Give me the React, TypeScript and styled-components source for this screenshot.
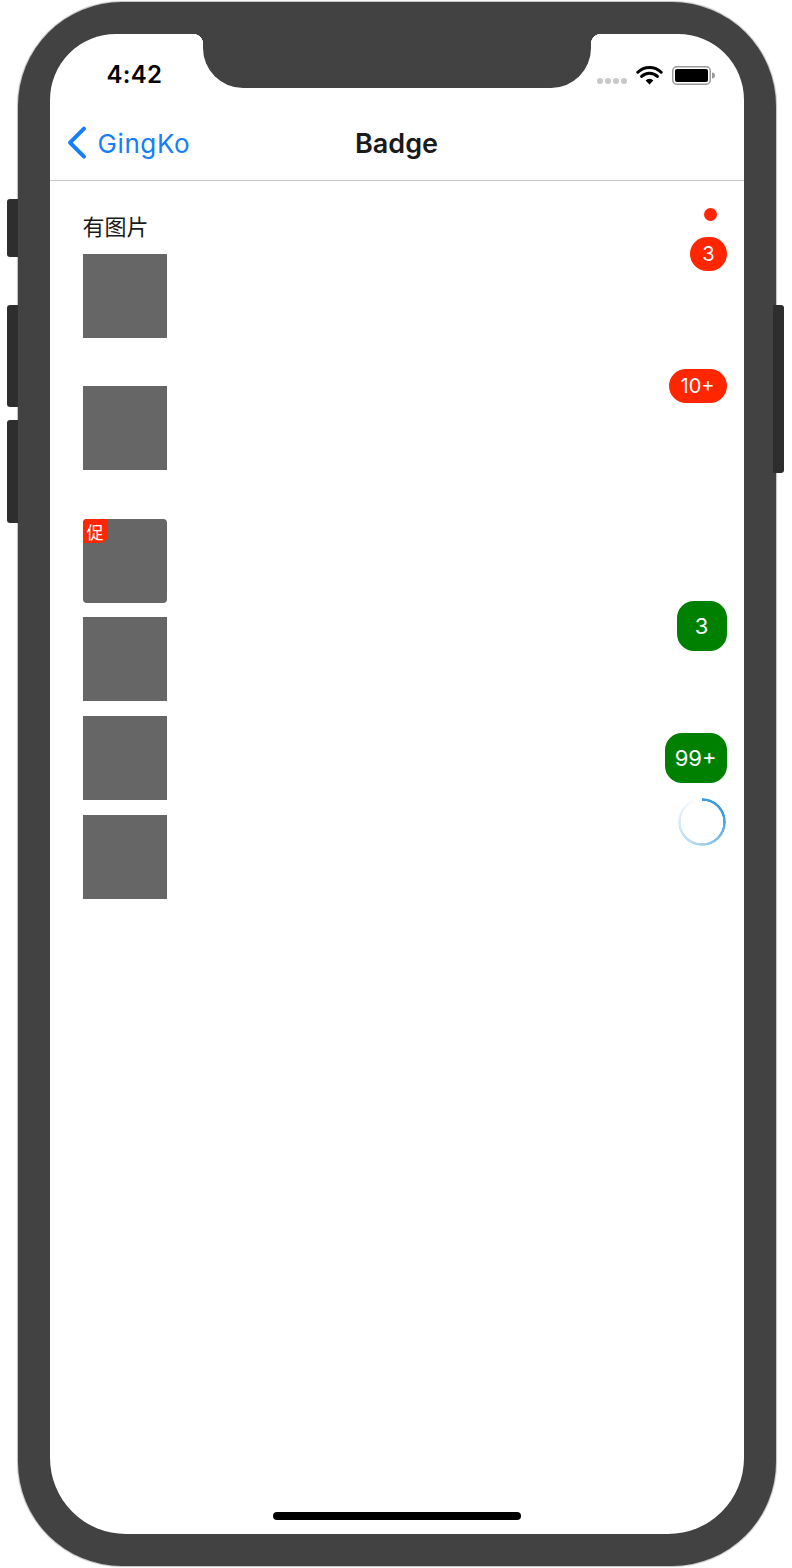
import React from "react";
import styled, { createGlobalStyle, css } from "styled-components";

const GlobalStyle = createGlobalStyle`
  html, body {
    margin: 0;
    padding: 0;
    background: #ffffff;
  }
  body {
    font-family: Inter, "Noto Sans", "Noto Sans CJK SC", sans-serif;
  }
  * {
    box-sizing: border-box;
  }
`;

const RED = "#ff2600";
const GREEN = "#008000";
const BEZEL = "#424242";

type Badge = { label?: string; kind: "dot" | "red" | "green"; top: number };

const badges: Badge[] = [
  { kind: "dot", top: 27 },
  { kind: "red", label: "3", top: 16 },
  { kind: "red", label: "10+", top: 98 },
  { kind: "green", label: "3", top: 198 },
  { kind: "green", label: "99+", top: 82 },
];

const thumbs = [
  { top: 15 },
  { top: 48 },
  { top: 49, tag: "促" },
  { top: 14 },
  { top: 15 },
  { top: 15 },
];

const WifiIcon = () => (
  <svg width="27" height="20" viewBox="0 0 27 20">
    <path
      d="M13.5 19.5 L9.6 15.4 A5.6 5.6 0 0 1 17.4 15.4 Z"
      fill="#000"
    />
    <path
      d="M5.6 11.4 A11.2 11.2 0 0 1 21.4 11.4"
      stroke="#000"
      strokeWidth="3"
      fill="none"
      strokeLinecap="round"
    />
    <path
      d="M1.8 7.2 A16.6 16.6 0 0 1 25.2 7.2"
      stroke="#000"
      strokeWidth="3"
      fill="none"
      strokeLinecap="round"
    />
  </svg>
);

const BatteryIcon = () => (
  <svg width="43" height="19" viewBox="0 0 43 19">
    <rect x="0.75" y="0.75" width="37.5" height="17.5" rx="4" fill="none" stroke="#9a9a9a" strokeWidth="1.5" />
    <rect x="3" y="3" width="33" height="13" rx="2" fill="#000" />
    <path d="M40 6.5 a2.5 2.5 0 0 1 0 6 Z" fill="#9a9a9a" />
  </svg>
);

const BackChevron = () => (
  <svg width="22" height="34" viewBox="0 0 22 34">
    <path
      d="M18 3 L4 17 L18 31"
      stroke="#147efb"
      strokeWidth="4"
      fill="none"
      strokeLinecap="round"
      strokeLinejoin="round"
    />
  </svg>
);

export default function App() {
  return (
    <>
      <GlobalStyle />
      <Page>
        <Phone>
          <SideButton $side="left" $top={197} $height={58} />
          <SideButton $side="left" $top={303} $height={102} />
          <SideButton $side="left" $top={418} $height={103} />
          <SideButton $side="right" $top={303} $height={168} />
          <Screen>
            <Notch />
            <StatusBar>
              <Time>4:42</Time>
              <StatusIcons>
                <Signal>
                  <SignalDot />
                  <SignalDot />
                  <SignalDot />
                  <SignalDot />
                </Signal>
                <WifiIcon />
                <BatteryIcon />
              </StatusIcons>
            </StatusBar>
            <NavBar>
              <BackButton>
                <BackChevron />
                <BackLabel>GingKo</BackLabel>
              </BackButton>
              <NavTitle>Badge</NavTitle>
            </NavBar>
            <Content>
              <LeftColumn>
                <Caption>有图片</Caption>
                {thumbs.map((t, i) => (
                  <Thumb key={i} $mt={t.top} $rounded={!!t.tag}>
                    {t.tag && <Tag>{t.tag}</Tag>}
                  </Thumb>
                ))}
              </LeftColumn>
              <RightColumn>
                {badges.map((b, i) =>
                  b.kind === "dot" ? (
                    <Dot key={i} $mt={b.top} />
                  ) : (
                    <Pill key={i} $mt={b.top} $kind={b.kind}>
                      {b.label}
                    </Pill>
                  )
                )}
                <Spinner />
              </RightColumn>
            </Content>
            <HomeIndicator />
          </Screen>
        </Phone>
      </Page>
    </>
  );
}

const Page = styled.div`
  width: 792px;
  height: 1568px;
  display: flex;
  justify-content: center;
  align-items: center;
  overflow: hidden;
`;

const Phone = styled.div`
  position: relative;
  width: 758px;
  height: 1564px;
  margin-left: 1px;
  padding: 32px;
  background: ${BEZEL};
  border-radius: 104px;
  box-shadow: 0 0 1px 1px rgba(0, 0, 0, 0.25);
  display: flex;
`;

const SideButton = styled.div<{ $side: "left" | "right"; $top: number; $height: number }>`
  position: absolute;
  top: ${(p) => p.$top}px;
  height: ${(p) => p.$height}px;
  width: 11px;
  background: #2e2e2e;
  ${(p) =>
    p.$side === "left"
      ? css`
          left: -11px;
          border-radius: 3px 0 0 3px;
        `
      : css`
          right: -8px;
          border-radius: 0 3px 3px 0;
        `}
`;

const Screen = styled.div`
  position: relative;
  flex: 1;
  background: #ffffff;
  border-radius: 66px 66px 76px 76px;
  overflow: hidden;
  display: flex;
  flex-direction: column;
`;

const Notch = styled.div`
  position: absolute;
  top: 0;
  left: 153px;
  width: 388px;
  height: 54px;
  background: ${BEZEL};
  border-radius: 0 0 40px 40px;

  &::before,
  &::after {
    content: "";
    position: absolute;
    top: 0;
    width: 10px;
    height: 10px;
  }
  &::before {
    left: -10px;
    background: radial-gradient(circle at 0 100%, transparent 10px, ${BEZEL} 10.5px);
  }
  &::after {
    right: -10px;
    background: radial-gradient(circle at 100% 100%, transparent 10px, ${BEZEL} 10.5px);
  }
`;

const StatusBar = styled.div`
  height: 70px;
  flex-shrink: 0;
  display: flex;
  justify-content: space-between;
  align-items: flex-start;
  padding: 28px 29px 0 57px;
`;

const Time = styled.div`
  font-size: 24px;
  font-weight: 600;
  line-height: 26px;
  color: #000;
  letter-spacing: 0.3px;
`;

const StatusIcons = styled.div`
  display: flex;
  align-items: center;
  gap: 9px;
  margin-top: 3px;
`;

const Signal = styled.div`
  display: flex;
  gap: 2px;
  margin-top: 12px;
`;

const SignalDot = styled.span`
  width: 6px;
  height: 6px;
  border-radius: 50%;
  background: #c8c8c8;
`;

const NavBar = styled.div`
  position: relative;
  height: 77px;
  flex-shrink: 0;
  display: flex;
  align-items: center;
  justify-content: center;
  padding-top: 3px;
  border-bottom: 1px solid #c8c8cc;
`;

const BackButton = styled.div`
  position: absolute;
  left: 16px;
  top: 50%;
  transform: translateY(-48%);
  display: flex;
  align-items: center;
  gap: 10px;
`;

const BackLabel = styled.span`
  font-size: 26px;
  color: #147efb;
  letter-spacing: 0.6px;
`;

const NavTitle = styled.h1`
  margin: 0;
  font-size: 27px;
  font-weight: 600;
  color: #1a1a1a;
`;

const Content = styled.div`
  flex: 1;
  display: flex;
  justify-content: space-between;
  padding: 0 17px 0 33px;
`;

const LeftColumn = styled.div`
  display: flex;
  flex-direction: column;
  padding-top: 31px;
`;

const Caption = styled.div`
  font-family: "Noto Sans CJK SC", sans-serif;
  font-size: 22px;
  line-height: 27px;
  color: #1a1a1a;
`;

const Thumb = styled.div<{ $mt: number; $rounded: boolean }>`
  position: relative;
  width: 84px;
  height: 84px;
  margin-top: ${(p) => p.$mt}px;
  background: #666666;
  border-radius: ${(p) => (p.$rounded ? "4px" : "0")};
  overflow: hidden;
`;

const Tag = styled.span`
  position: absolute;
  top: 0;
  left: 0;
  width: 25px;
  height: 24px;
  display: flex;
  align-items: center;
  justify-content: center;
  background: ${RED};
  color: #fff;
  font-family: "Noto Sans CJK SC", sans-serif;
  font-size: 17px;
  line-height: 1;
  border-bottom-right-radius: 8px;
`;

const RightColumn = styled.div`
  display: flex;
  flex-direction: column;
  align-items: flex-end;
`;

const Dot = styled.span<{ $mt: number }>`
  width: 13px;
  height: 13px;
  margin-top: ${(p) => p.$mt}px;
  margin-right: 10px;
  border-radius: 50%;
  background: ${RED};
`;

const Pill = styled.span<{ $mt: number; $kind: "red" | "green" }>`
  display: flex;
  align-items: center;
  justify-content: center;
  margin-top: ${(p) => p.$mt}px;
  color: #fff;
  font-family: Inter, "Noto Sans", sans-serif;
  ${(p) =>
    p.$kind === "red"
      ? css`
          min-width: 35px;
          height: 34px;
          padding: 0 12px;
          border-radius: 17px;
          background: ${RED};
          font-size: 20px;
        `
      : css`
          min-width: 50px;
          height: 50px;
          padding: 0 10px;
          border-radius: 17px;
          background: ${GREEN};
          font-size: 22px;
        `}
`;

const Spinner = styled.span`
  width: 48px;
  height: 48px;
  margin-top: 15px;
  margin-right: 1px;
  border-radius: 50%;
  background: conic-gradient(
    from 0deg,
    #3d9be0 0deg,
    #3d9be0 70deg,
    rgba(61, 155, 224, 0.45) 180deg,
    rgba(61, 155, 224, 0.12) 300deg,
    rgba(61, 155, 224, 0) 350deg
  );
  -webkit-mask: radial-gradient(farthest-side, transparent calc(100% - 3px), #000 calc(100% - 2.5px));
  mask: radial-gradient(farthest-side, transparent calc(100% - 3px), #000 calc(100% - 2.5px));
`;

const HomeIndicator = styled.div`
  width: 248px;
  height: 8px;
  margin: 0 auto 14px;
  border-radius: 4px;
  background: #000;
  flex-shrink: 0;
`;
